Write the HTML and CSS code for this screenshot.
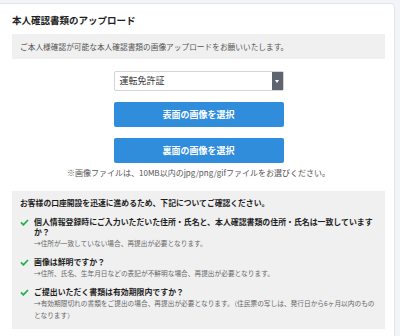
FILE: index.html
```html
<!DOCTYPE html>
<html lang="ja">
<head>
  <meta charset="UTF-8">
  <meta name="viewport" content="width=device-width, initial-scale=1.0">
  <title>本人確認書類のアップロード</title>
  <link rel="stylesheet" href="styles.css">
</head>
<body>
  <div class="page">
    <div class="card">
      <h1 class="title">本人確認書類のアップロード</h1>
      <p class="notice">ご本人様確認が可能な本人確認書類の画像アップロードをお願いいたします。</p>

      <div class="form">
        <div class="select">
          <span class="select-label">運転免許証</span>
          <span class="select-arrow"><span class="triangle"></span></span>
        </div>
        <button class="button">表面の画像を選択</button>
        <button class="button">裏面の画像を選択</button>
        <p class="note">※画像ファイルは、10MB以内のjpg/png/gifファイルをお選びください。</p>
      </div>

      <div class="checklist">
        <p class="checklist-title">お客様の口座開設を迅速に進めるため、下記についてご確認ください。</p>
        <ul class="items">
          <li class="item">
            <svg class="check" width="9" height="7" viewBox="0 0 9 7"><polyline points="1,3.4 3.4,5.8 8,1" fill="none" stroke="#22b24c" stroke-width="1.8"/></svg>
            <div class="item-body">
              <p class="item-title">個人情報登録時にご入力いただいた住所・氏名と、本人確認書類の住所・氏名は一致していますか？</p>
              <p class="item-sub">→住所が一致していない場合、再提出が必要となります。</p>
            </div>
          </li>
          <li class="item">
            <svg class="check" width="9" height="7" viewBox="0 0 9 7"><polyline points="1,3.4 3.4,5.8 8,1" fill="none" stroke="#22b24c" stroke-width="1.8"/></svg>
            <div class="item-body">
              <p class="item-title">画像は鮮明ですか？</p>
              <p class="item-sub">→住所、氏名、生年月日などの表記が不鮮明な場合、再提出が必要となります。</p>
            </div>
          </li>
          <li class="item">
            <svg class="check" width="9" height="7" viewBox="0 0 9 7"><polyline points="1,3.4 3.4,5.8 8,1" fill="none" stroke="#22b24c" stroke-width="1.8"/></svg>
            <div class="item-body">
              <p class="item-title">ご提出いただく書類は有効期限内ですか？</p>
              <p class="item-sub">→有効期限切れの書類をご提出の場合、再提出が必要となります。（住民票の写しは、発行日から6ヶ月以内のものとなります）</p>
            </div>
          </li>
        </ul>
      </div>
    </div>
  </div>
</body>
</html>
```

FILE: styles.css
```css
body {
  margin: 0;
  padding: 0;
  background-color: #f3f4f8;
  font-family: 'Noto Sans CJK JP', 'Noto Sans', sans-serif;
  color: #333;
}

p {
  margin: 0;
}

.page {
  padding: 3px 5px 0 0;
  height: 333px;
  overflow: hidden;
}

.card {
  background-color: #fff;
  border: 1px solid #e3e5ec;
  border-left: none;
  border-radius: 0 4px 0 0;
  padding: 9px 9px 20px 12px;
}

.title {
  margin: 0;
  font-size: 9.5px;
  line-height: 14px;
  font-weight: bold;
  color: #1e1e1e;
}

.notice {
  margin-top: 7px;
  background-color: #f0f0f0;
  padding: 0 8px;
  font-size: 7.7px;
  line-height: 25px;
  color: #555;
}

.form {
  display: flex;
  flex-direction: column;
  align-items: center;
}

.select {
  margin-top: 12px;
  width: 170px;
  height: 20px;
  box-sizing: border-box;
  border: 1px solid #d4d4d4;
  border-radius: 2px;
  display: flex;
  align-items: stretch;
  background-color: #fff;
}

.select-label {
  flex: 1;
  padding-left: 5px;
  font-size: 9px;
  line-height: 18px;
  color: #333;
}

.select-arrow {
  width: 11px;
  background-color: #5e656e;
  display: flex;
  align-items: center;
  justify-content: center;
}

.triangle {
  width: 0;
  height: 0;
  border-left: 2.5px solid transparent;
  border-right: 2.5px solid transparent;
  border-top: 3px solid #fff;
}

.button {
  margin-top: 11px;
  width: 170px;
  height: 25px;
  border: none;
  border-radius: 2px;
  background-color: #2f8ddb;
  color: #fff;
  font-family: inherit;
  font-size: 9px;
  font-weight: bold;
  padding: 0;
  cursor: pointer;
}

.note {
  margin-top: 4px;
  font-size: 8px;
  line-height: 12px;
  color: #555;
}

.checklist {
  margin-top: 12px;
  background-color: #f0f0f0;
  padding: 6px 8px 8px 8px;
}

.checklist-title {
  font-size: 7.8px;
  line-height: 12px;
  font-weight: bold;
  color: #1e1e1e;
}

.items {
  list-style: none;
  margin: 0;
  padding: 0;
}

.item {
  display: flex;
  gap: 5px;
  margin-top: 8px;
}

.check {
  flex: none;
  margin-top: 2px;
}

.item-title {
  font-size: 7.9px;
  line-height: 10px;
  font-weight: bold;
  color: #1e1e1e;
}

.item-sub {
  font-size: 6.7px;
  line-height: 12px;
  color: #666;
}
```
